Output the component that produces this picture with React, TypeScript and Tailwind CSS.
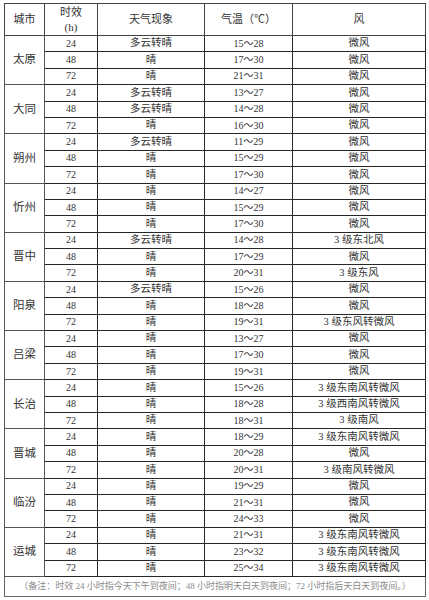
type Row = [string, string, string, string]

const cities: { name: string; rows: Row[] }[] = [
  { name: '太原', rows: [['24', '多云转晴', '15～28', '微风'], ['48', '晴', '17～30', '微风'], ['72', '晴', '21～31', '微风']] },
  { name: '大同', rows: [['24', '多云转晴', '13～27', '微风'], ['48', '多云转晴', '14～28', '微风'], ['72', '晴', '16～30', '微风']] },
  { name: '朔州', rows: [['24', '多云转晴', '11～29', '微风'], ['48', '晴', '15～29', '微风'], ['72', '晴', '17～30', '微风']] },
  { name: '忻州', rows: [['24', '晴', '14～27', '微风'], ['48', '晴', '15～29', '微风'], ['72', '晴', '17～30', '微风']] },
  { name: '晋中', rows: [['24', '多云转晴', '14～28', '3 级东北风'], ['48', '晴', '17～29', '微风'], ['72', '晴', '20～31', '3 级东风']] },
  { name: '阳泉', rows: [['24', '多云转晴', '15～26', '微风'], ['48', '晴', '18～28', '微风'], ['72', '晴', '19～31', '3 级东风转微风']] },
  { name: '吕梁', rows: [['24', '晴', '13～27', '微风'], ['48', '晴', '17～30', '微风'], ['72', '晴', '19～31', '微风']] },
  { name: '长治', rows: [['24', '晴', '15～26', '3 级东南风转微风'], ['48', '晴', '18～28', '3 级西南风转微风'], ['72', '晴', '18～31', '3 级南风']] },
  { name: '晋城', rows: [['24', '晴', '18～29', '3 级东南风转微风'], ['48', '晴', '20～28', '微风'], ['72', '晴', '20～31', '3 级南风转微风']] },
  { name: '临汾', rows: [['24', '晴', '19～29', '微风'], ['48', '晴', '21～31', '微风'], ['72', '晴', '24～33', '微风']] },
  { name: '运城', rows: [['24', '晴', '21～31', '3 级东南风转微风'], ['48', '晴', '23～32', '3 级东南风转微风'], ['72', '晴', '25～34', '3 级东南风转微风']] },
]

export default function App() {
  const cell = 'border border-[#262626] p-0 text-center align-middle h-[16.4px] leading-none'
  return (
    <div className="w-[429px] h-[600px] bg-white pt-[3px] pl-[4px] font-['Liberation_Serif','Noto_Sans_CJK_SC',serif] text-[#333]">
      <table className="table-fixed border-collapse w-[421px] border border-[#666]">
        <colgroup>
          <col className="w-[40px]" />
          <col className="w-[53px]" />
          <col className="w-[107px]" />
          <col className="w-[88px]" />
          <col className="w-[133px]" />
        </colgroup>
        <thead>
          <tr className="h-[32px] text-[11px]">
            <th className="border border-[#444] font-normal">城市</th>
            <th className="border border-[#444] font-normal leading-[15px]">
              时效<br />(h)
            </th>
            <th className="border border-[#444] font-normal">天气现象</th>
            <th className="border border-[#444] font-normal">气温（℃）</th>
            <th className="border border-[#444] font-normal">风</th>
          </tr>
        </thead>
        <tbody>
          {cities.map((c) =>
            c.rows.map((r, i) => (
              <tr key={c.name + i}>
                {i === 0 && (
                  <td rowSpan={3} className="border border-[#555] text-center text-[11.5px]">
                    {c.name}
                  </td>
                )}
                <td className={`${cell} text-[10px]`}>{r[0]}</td>
                <td className={`${cell} text-[10.5px]`}>{r[1]}</td>
                <td className={`${cell} text-[10px]`}>{r[2]}</td>
                <td className={`${cell} text-[10.5px]`}>{r[3]}</td>
              </tr>
            ))
          )}
          <tr className="h-[20px]">
            <td colSpan={5} className="border border-[#666] text-center text-[9px] text-[#8a8a8a] leading-none">
              （备注：时效 24 小时指今天下午到夜间；48 小时指明天白天到夜间；72 小时指后天白天到夜间。）
            </td>
          </tr>
        </tbody>
      </table>
    </div>
  )
}
